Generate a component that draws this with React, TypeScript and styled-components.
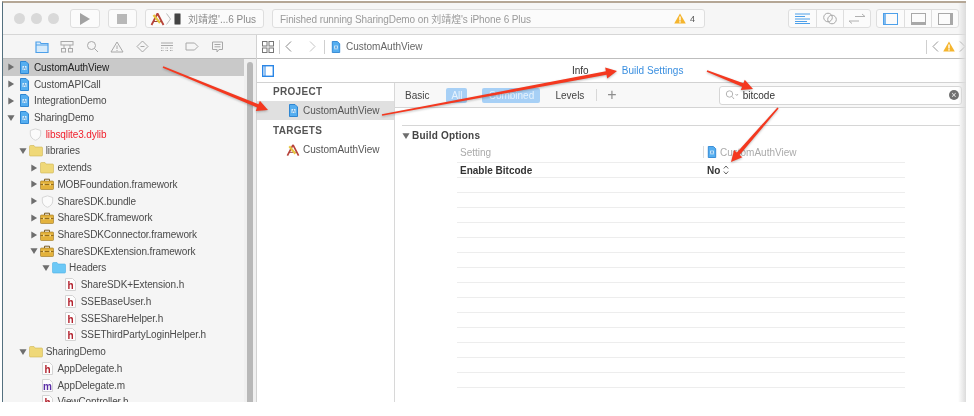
import React from 'react';
import styled, { createGlobalStyle } from 'styled-components';

const GlobalStyle = createGlobalStyle`
  html, body {
    margin: 0;
    padding: 0;
    background: #fff;
    font-family: "Liberation Sans", Arial, sans-serif;
  }
`;

const CJK = '"Liberation Sans", "Noto Sans CJK SC", sans-serif';

// ----- shell -----
const Page = styled.div`
  position: relative;
  width: 974px;
  height: 416px;
  overflow: hidden;
  background: #fff;
`;

const Window = styled.div`
  position: relative;
  margin: 1px 0 0 2px;
  width: 964px;
  height: 401px;
  overflow: hidden;
  display: flex;
  flex-direction: column;
  background: #fff;
  border-top: 2px solid #b5a796;
  border-left: 1px solid #54707f;
  box-sizing: border-box;
  filter: blur(0.5px);
`;

const EdgeFade = styled.div`
  position: absolute;
  top: 0;
  right: 0;
  bottom: 0;
  width: 8px;
  background: linear-gradient(to right, rgba(225, 225, 225, 0), #dcdcdc);
`;

// ----- toolbar -----
const Toolbar = styled.div`
  height: 31px;
  flex: none;
  display: flex;
  align-items: center;
  padding: 0 0 0 11px;
  background: #f6f6f6;
  border-bottom: 1px solid #d6d6d6;
`;

const Lights = styled.div`
  display: flex;
  gap: 6px;
  margin-right: 11px;
`;

const Light = styled.span`
  width: 11px;
  height: 11px;
  border-radius: 50%;
  background: #d9d9d9;
`;

const ToolButton = styled.div`
  width: 29.5px;
  height: 19px;
  flex: none;
  margin-right: 8px;
  box-sizing: border-box;
  display: flex;
  align-items: center;
  justify-content: center;
  background: #fbfbfb;
  border: 1px solid #dedede;
  border-radius: 3px;
`;

const Scheme = styled.div`
  width: 119px;
  height: 19px;
  flex: none;
  margin-right: 8px;
  display: flex;
  align-items: center;
  padding-left: 4px;
  box-sizing: border-box;
  background: #fbfbfb;
  border: 1px solid #dedede;
  border-radius: 3px;
  font: 10px ${CJK};
  color: #8a8a8a;
  white-space: nowrap;
`;

const SchemeChevron = styled.svg`
  margin: 0 3px 0 1px;
`;

const SchemeDevice = styled.svg`
  margin-right: 7px;
`;

const Status = styled.div`
  width: 433px;
  height: 19px;
  flex: none;
  display: flex;
  align-items: center;
  padding: 0 9px 0 7px;
  box-sizing: border-box;
  background: #fbfbfb;
  border: 1px solid #dedede;
  border-radius: 3px;
  font: 10px ${CJK};
  letter-spacing: -0.1px;
  color: #9a9a9a;
  white-space: nowrap;
`;

const StatusText = styled.span`
  flex: 1;
`;

const WarnCount = styled.span`
  margin-left: 4px;
  font-size: 9px;
  color: #555;
`;

const Segments = styled.div`
  display: flex;
  flex: none;
  height: 19px;
  box-sizing: border-box;
  margin-left: 83px;
  background: #fbfbfb;
  border: 1px solid #dedede;
  border-radius: 3px;
`;

const PanelSegments = styled(Segments)`
  margin-left: 5px;
`;

const Segment = styled.div`
  width: 27px;
  box-sizing: border-box;
  display: flex;
  align-items: center;
  justify-content: center;
  & + & {
    border-left: 1px solid #dedede;
  }
`;

// ----- body -----
const Body = styled.div`
  flex: 1;
  min-height: 0;
  display: flex;
`;

const Navigator = styled.div`
  width: 253px;
  flex: none;
  display: flex;
  flex-direction: column;
  background: #f5f5f5;
  border-right: 1px solid #d2d2d2;
`;

const NavTabs = styled.div`
  height: 23px;
  flex: none;
  display: flex;
  align-items: center;
  padding-left: 31px;
  gap: 9px;
  border-bottom: 1px solid #bdbdbd;
`;

const NavTab = styled.div`
  width: 16px;
  display: flex;
  justify-content: center;
`;

const TreeArea = styled.div`
  flex: 1;
  min-height: 0;
  display: flex;
`;

const Tree = styled.div`
  flex: 1;
  min-width: 0;
  overflow: hidden;
`;

const ScrollTrack = styled.div`
  width: 12px;
  flex: none;
  padding: 3px 3px 0;
  box-sizing: border-box;
  background: #f0f0f0;
`;

const ScrollThumb = styled.div`
  height: 100%;
  background: #b8b8b8;
  border-radius: 3px 3px 0 0;
`;

const TreeRow = styled.div<{ $level: number; $selected?: boolean }>`
  height: 16.72px;
  display: flex;
  align-items: center;
  padding-left: ${({ $level }) => 2 + $level * 11.7}px;
  background: ${({ $selected }) => ($selected ? '#c9c9c9' : 'transparent')};
`;

const Disclosure = styled.span`
  width: 12px;
  flex: none;
  display: flex;
  justify-content: center;
`;

const IconSlot = styled.span`
  width: 14px;
  margin-right: 3px;
  flex: none;
  display: flex;
  justify-content: center;
`;

const TreeLabel = styled.span<{ $missing?: boolean; $selected?: boolean }>`
  font-size: 10px;
  letter-spacing: -0.1px;
  white-space: nowrap;
  color: ${({ $missing, $selected }) => ($missing ? '#f0202c' : $selected ? '#222' : '#4a4a4a')};
`;

// ----- editor -----
const Editor = styled.div`
  flex: 1;
  min-width: 0;
  display: flex;
  flex-direction: column;
`;

const JumpBar = styled.div`
  height: 23px;
  flex: none;
  display: flex;
  align-items: center;
  padding: 0 0 0 5px;
  border-bottom: 1px solid #bdbdbd;
  font-size: 10px;
  color: #666;
`;

const JumpDivider = styled.span`
  width: 1px;
  height: 14px;
  margin: 0 5px;
  background: #cfcfcf;
`;

const JumpCrumb = styled.span`
  flex: 1;
  margin-left: 4px;
`;

const JumpWarn = styled.span`
  width: 20px;
  display: flex;
  justify-content: center;
`;

const TabBar = styled.div`
  height: 23px;
  flex: none;
  position: relative;
  display: flex;
  align-items: center;
  padding-left: 5px;
  border-bottom: 1px solid #d2d2d2;
  font-size: 10px;
`;

const Tabs = styled.div`
  display: flex;
  margin-left: 298px;
  gap: 33px;
`;

const TabLabel = styled.span<{ $active?: boolean }>`
  letter-spacing: ${({ $active }) => ($active ? '0.05px' : '0')};
  color: ${({ $active }) => ($active ? '#3a8fe0' : '#333')};
`;

const Split = styled.div`
  flex: 1;
  min-height: 0;
  display: flex;
`;

const ProjectList = styled.div`
  width: 137px;
  flex: none;
  padding-top: 1px;
  border-right: 1px solid #d8d8d8;
`;

const ListHeading = styled.div`
  height: 15px;
  padding-left: 16px;
  display: flex;
  align-items: center;
  font-size: 10px;
  font-weight: 700;
  letter-spacing: 0.3px;
  color: #555;
`;

const ProjectRow = styled.div<{ $selected?: boolean }>`
  height: 19px;
  margin: 2px 0 3px;
  display: flex;
  align-items: center;
  padding-left: 29px;
  background: ${({ $selected }) => ($selected ? '#e0e0e0' : 'transparent')};
  font-size: 10px;
  color: #555;
`;

const ProjectIcon = styled.span`
  width: 14px;
  margin-right: 3px;
  display: flex;
  justify-content: center;
`;

const Settings = styled.div`
  flex: 1;
  min-width: 0;
  display: flex;
  flex-direction: column;
`;

const FilterBar = styled.div`
  height: 24px;
  flex: none;
  display: flex;
  align-items: center;
  padding: 0 4px 0 10px;
  background: #f8f8f8;
  border-bottom: 1px solid #d4d4d4;
  font-size: 10px;
  color: #444;
`;

const FilterText = styled.span<{ $gap: number }>`
  margin-right: ${({ $gap }) => $gap}px;
`;

const Pill = styled.span<{ $width: number; $gap: number }>`
  width: ${({ $width }) => $width}px;
  height: 15px;
  margin-right: ${({ $gap }) => $gap}px;
  display: flex;
  align-items: center;
  justify-content: center;
  border-radius: 2px;
  background: #a7d0f6;
  color: #e6f2fd;
`;

const FilterDivider = styled.span`
  width: 1px;
  height: 12px;
  margin-right: 10px;
  background: #d8d8d8;
`;

const Plus = styled.span`
  font-size: 16px;
  font-weight: 400;
  color: #8e8e8e;
  margin-right: 102px;
`;

const SearchField = styled.div`
  flex: 1;
  height: 17px;
  display: flex;
  align-items: center;
  padding: 0 2px 0 5px;
  background: #fff;
  border: 1px solid #d6d6d6;
  border-radius: 3px;
  color: #333;
`;

const SearchValue = styled.span`
  flex: 1;
  margin-left: 4px;
`;

const Clear = styled.span`
  width: 10px;
  height: 10px;
  border-radius: 50%;
  background: #707070;
  color: #eee;
  font-size: 9px;
  line-height: 10px;
  text-align: center;
`;

const SettingsBody = styled.div`
  flex: 1;
  padding: 17px 61px 0 7px;
`;

const SectionRule = styled.div`
  height: 1px;
  margin-right: -55px;
  background: #d6d6d6;
`;

const SectionTitle = styled.div`
  display: flex;
  align-items: center;
  gap: 2px;
  height: 17px;
  margin-top: 1px;
  font-size: 10px;
  font-weight: 700;
  letter-spacing: 0.2px;
  color: #444;
`;

const SettingsTable = styled.div`
  margin-left: 55px;
`;

const SettingsRow = styled.div`
  height: 14px;
  display: flex;
  align-items: center;
  border-bottom: 1px solid #ededed;
  font-size: 10px;
`;

const HeadRow = styled(SettingsRow)`
  height: 19px;
  padding-bottom: 2px;
  box-sizing: border-box;
  color: #aaa;
`;

const NameCell = styled.span<{ $bold?: boolean }>`
  width: 246px;
  padding-left: 3px;
  box-sizing: border-box;
  flex: none;
  font-weight: ${({ $bold }) => ($bold ? 700 : 400)};
  color: ${({ $bold }) => ($bold ? '#333' : '#aaa')};
`;

const ValueCell = styled.span`
  display: flex;
  align-items: center;
  gap: 3px;
  font-weight: 700;
  color: #333;
  padding-left: 4px;
`;

const HeadValue = styled.span`
  display: flex;
  align-items: center;
  gap: 2px;
  padding-left: 2px;
  border-left: 1px solid #ddd;
`;

const ArrowLayer = styled.svg`
  position: absolute;
  left: 0;
  top: 0;
  filter: drop-shadow(0 1px 1px rgba(60, 60, 60, 0.35)) blur(0.3px);
`;

// ----- icons -----
const Tri: React.FC<{ open?: boolean }> = ({ open }) => (
  <svg width="8" height="8" viewBox="0 0 9 9">
    {open ? <path d="M0.500 1.500h8L4.500 8z" fill="#6e6e6e" /> : <path d="M1.500 0.500v8L8 4.500z" fill="#6e6e6e" />}
  </svg>
);

const FileIcon: React.FC<{ size?: number }> = ({ size = 13 }) => (
  <svg width={size} height={size} viewBox="0 0 13 13">
    <path d="M2.500 0.500h5.500l2.500 2.500v9.500h-8z" fill="#55aef0" stroke="#2f86d2" />
    <rect x="4.500" y="5" width="4" height="4" fill="#d9eefc" />
    <path d="M5.500 8.500l1-3 1 3" fill="none" stroke="#2f86d2" strokeWidth="0.7" />
  </svg>
);

const FolderIcon: React.FC<{ blue?: boolean }> = ({ blue }) => (
  <svg width="14" height="13" viewBox="0 0 14 13">
    <path
      d="M0.500 2.500q0-1 1-1h3.500l1 1.500h6.500q1 0 1 1v7q0 1-1 1h-11q-1 0-1-1z"
      fill={blue ? '#6cc8f6' : '#efd878'}
      stroke={blue ? '#4bb0e6' : '#cfb555'}
      strokeWidth="0.6"
    />
  </svg>
);

const ToolboxIcon: React.FC = () => (
  <svg width="14" height="12" viewBox="0 0 14 12">
    <path d="M4.500 3V1.200h5V3" fill="none" stroke="#7a5a20" strokeWidth="1" />
    <rect x="0.500" y="3" width="13" height="8.500" rx="0.800" fill="#e3b23c" stroke="#9a7320" strokeWidth="0.6" />
    <path d="M0.500 6.500h13" stroke="#8a6418" strokeWidth="0.9" />
    <rect x="3" y="5.600" width="1.600" height="1.800" fill="#f4e0a0" />
    <rect x="9.400" y="5.600" width="1.600" height="1.800" fill="#f4e0a0" />
  </svg>
);

const ShieldIcon: React.FC = () => (
  <svg width="13" height="13" viewBox="0 0 13 13">
    <path d="M6.500 0.800l5.200 1.700v3.600c0 3-2.400 5.200-5.200 6.200-2.800-1-5.200-3.200-5.200-6.200V2.500z" fill="#fbfbfb" stroke="#d6d6d6" />
  </svg>
);

const SourceIcon: React.FC<{ letter: string; color: string }> = ({ letter, color }) => (
  <svg width="11" height="13" viewBox="0 0 11 13">
    <path d="M0.500 0.500h7l3 3v9h-10z" fill="#fdfdfd" stroke="#d4d4d4" />
    <text x="5.500" y="10.500" textAnchor="middle" fontFamily="Liberation Sans" fontWeight="700" fontSize="10" fill={color}>
      {letter}
    </text>
  </svg>
);

const TargetIcon: React.FC = () => (
  <svg width="15" height="14" viewBox="0 0 15 14">
    <path d="M7.500 1.500L1.500 13M7.500 1.500L13.500 13" fill="none" stroke="#b8433a" strokeWidth="1.800" />
    <path d="M3.500 9.500h8" stroke="#a0413a" strokeWidth="1" />
    <path d="M3.500 3l6.500 8" stroke="#e6c640" strokeWidth="2.200" />
  </svg>
);

type IconName = 'file' | 'folder' | 'blue' | 'box' | 'shield' | 'h' | 'm';

const TreeIcon: React.FC<{ name: IconName }> = ({ name }) => {
  switch (name) {
    case 'file':
      return <FileIcon />;
    case 'folder':
      return <FolderIcon />;
    case 'blue':
      return <FolderIcon blue />;
    case 'box':
      return <ToolboxIcon />;
    case 'shield':
      return <ShieldIcon />;
    case 'h':
      return <SourceIcon letter="h" color="#b3202c" />;
    default:
      return <SourceIcon letter="m" color="#5a2ea6" />;
  }
};

const WarningIcon: React.FC = () => (
  <svg width="12" height="11" viewBox="0 0 12 11">
    <path d="M6 0.500L11.800 10.500H0.200z" fill="#f5b52e" />
    <rect x="5.300" y="3.500" width="1.400" height="4" fill="#fff" />
    <rect x="5.300" y="8.200" width="1.400" height="1.400" fill="#fff" />
  </svg>
);

const navIcon = { fill: 'none', stroke: '#a8a8a8', strokeWidth: 1 };

const NavIcons: React.ReactNode[] = [
  <svg key="folder" width="14" height="12" viewBox="0 0 14 12">
    <path d="M1 1h4l1 1.500h7v9H1z" fill="#d5eafb" stroke="#4da0ea" strokeWidth="1.200" />
    <path d="M1 4h12" stroke="#4da0ea" />
  </svg>,
  <svg key="tree" width="14" height="12" viewBox="0 0 14 12" {...navIcon}>
    <rect x="1" y="0.500" width="12" height="3.500" />
    <path d="M4 4v3M10 4v3" />
    <rect x="1.500" y="7.500" width="4" height="3.500" />
    <rect x="8.500" y="7.500" width="4" height="3.500" />
  </svg>,
  <svg key="search" width="13" height="13" viewBox="0 0 13 13" {...navIcon}>
    <circle cx="5.500" cy="5.500" r="4" />
    <path d="M8.500 8.500l3.500 3.500" />
  </svg>,
  <svg key="warn" width="14" height="12" viewBox="0 0 14 12" {...navIcon}>
    <path d="M7 1l6 10H1z" />
    <path d="M7 4.500v3.500M7 9v1" />
  </svg>,
  <svg key="test" width="13" height="13" viewBox="0 0 13 13" {...navIcon}>
    <path d="M6.500 1L12 6.500 6.500 12 1 6.500z" />
    <path d="M4.500 6.500h4" />
  </svg>,
  <svg key="debug" width="14" height="10" viewBox="0 0 14 10" {...navIcon}>
    <path d="M1 1h12M1 3.500h12" />
    <path d="M1 6h3M5.500 6h3M10 6h3M1 8.500h3M5.500 8.500h3M10 8.500h3" strokeDasharray="1 0.500" />
  </svg>,
  <svg key="label" width="14" height="9" viewBox="0 0 14 9" {...navIcon}>
    <path d="M1 1h8.500L13 4.500 9.500 8H1z" />
  </svg>,
  <svg key="report" width="13" height="12" viewBox="0 0 13 12" {...navIcon}>
    <path d="M1.500 1h10v7.500H8L6 11V8.500H1.500z" />
    <path d="M3.500 3.500h6M3.500 5.800h6" />
  </svg>
];

interface Row {
  level: number;
  label: string;
  icon: IconName;
  tri?: 'open' | 'closed';
  selected?: boolean;
  missing?: boolean;
}

const rows: Row[] = [
  { level: 0, label: 'CustomAuthView', icon: 'file', tri: 'closed', selected: true },
  { level: 0, label: 'CustomAPICall', icon: 'file', tri: 'closed' },
  { level: 0, label: 'IntegrationDemo', icon: 'file', tri: 'closed' },
  { level: 0, label: 'SharingDemo', icon: 'file', tri: 'open' },
  { level: 1, label: 'libsqlite3.dylib', icon: 'shield', missing: true },
  { level: 1, label: 'libraries', icon: 'folder', tri: 'open' },
  { level: 2, label: 'extends', icon: 'folder', tri: 'closed' },
  { level: 2, label: 'MOBFoundation.framework', icon: 'box', tri: 'closed' },
  { level: 2, label: 'ShareSDK.bundle', icon: 'shield', tri: 'closed' },
  { level: 2, label: 'ShareSDK.framework', icon: 'box', tri: 'closed' },
  { level: 2, label: 'ShareSDKConnector.framework', icon: 'box', tri: 'closed' },
  { level: 2, label: 'ShareSDKExtension.framework', icon: 'box', tri: 'open' },
  { level: 3, label: 'Headers', icon: 'blue', tri: 'open' },
  { level: 4, label: 'ShareSDK+Extension.h', icon: 'h' },
  { level: 4, label: 'SSEBaseUser.h', icon: 'h' },
  { level: 4, label: 'SSEShareHelper.h', icon: 'h' },
  { level: 4, label: 'SSEThirdPartyLoginHelper.h', icon: 'h' },
  { level: 1, label: 'SharingDemo', icon: 'folder', tri: 'open' },
  { level: 2, label: 'AppDelegate.h', icon: 'h' },
  { level: 2, label: 'AppDelegate.m', icon: 'm' },
  { level: 2, label: 'ViewController.h', icon: 'h' }
];

const EMPTY_ROWS = Array.from({ length: 14 }, (_, i) => i);

// tapered arrow: thin tail, wider towards the head
const Arrow: React.FC<{ from: [number, number]; to: [number, number] }> = ({ from, to }) => {
  const dx = to[0] - from[0];
  const dy = to[1] - from[1];
  const len = Math.hypot(dx, dy);
  const ux = dx / len;
  const uy = dy / len;
  const nx = -uy;
  const ny = ux;
  const neckX = to[0] - ux * 11;
  const neckY = to[1] - uy * 11;
  const pts = [
    [from[0] + nx * 0.8, from[1] + ny * 0.8],
    [neckX + nx * 1.8, neckY + ny * 1.8],
    [neckX + nx * 5.5, neckY + ny * 5.5],
    [to[0], to[1]],
    [neckX - nx * 5.5, neckY - ny * 5.5],
    [neckX - nx * 1.8, neckY - ny * 1.8],
    [from[0] - nx * 0.8, from[1] - ny * 0.8]
  ];
  return <polygon points={pts.map((p) => p.join(',')).join(' ')} fill="#f4381f" />;
};

const App: React.FC = () => {
  return (
    <Page>
      <GlobalStyle />
      <Window>
        <Toolbar>
          <Lights>
            <Light />
            <Light />
            <Light />
          </Lights>
          <ToolButton>
            <svg width="10" height="12" viewBox="0 0 10 12">
              <path d="M0 0l10 6-10 6z" fill="#a2a2a2" />
            </svg>
          </ToolButton>
          <ToolButton>
            <svg width="10" height="10" viewBox="0 0 10 10">
              <rect width="10" height="10" fill="#b8b8b8" />
            </svg>
          </ToolButton>
          <Scheme>
            <TargetIcon />
            <SchemeChevron width="5" height="12" viewBox="0 0 5 12">
              <path d="M0.500 0.500L4.500 6 0.500 11.500" fill="none" stroke="#bbb" />
            </SchemeChevron>
            <SchemeDevice width="7" height="12" viewBox="0 0 7 12">
              <rect x="0.500" y="0.500" width="6" height="11" rx="1" fill="#444" stroke="#999" />
            </SchemeDevice>
            刘靖煌'...6 Plus
          </Scheme>
          <Status>
            <StatusText>Finished running SharingDemo on 刘靖煌's iPhone 6 Plus</StatusText>
            <WarningIcon />
            <WarnCount>4</WarnCount>
          </Status>
          <Segments>
            <Segment>
              <svg width="15" height="11" viewBox="0 0 15 11">
                <path d="M0 1h15M0 3.500h10M0 6h15M0 8.500h12M0 10.500h15" stroke="#4da0ea" />
              </svg>
            </Segment>
            <Segment>
              <svg width="14" height="13" viewBox="0 0 14 13" fill="none" stroke="#a8a8a8">
                <circle cx="5" cy="5.500" r="4.300" />
                <circle cx="9" cy="7.500" r="4.300" />
              </svg>
            </Segment>
            <Segment>
              <svg width="16" height="11" viewBox="0 0 16 11" fill="none" stroke="#b0b0b0">
                <path d="M6 3.500h10M13 1l3 2.500M0 8h10M3 10.500L0 8" />
              </svg>
            </Segment>
          </Segments>
          <PanelSegments>
            <Segment>
              <svg width="15" height="12" viewBox="0 0 15 12" fill="none" stroke="#4da0ea">
                <rect x="0.500" y="0.500" width="14" height="11" />
                <path d="M2 0.500v11" strokeWidth="1.400" />
              </svg>
            </Segment>
            <Segment>
              <svg width="15" height="12" viewBox="0 0 15 12" fill="none" stroke="#a8a8a8">
                <rect x="0.500" y="0.500" width="14" height="11" />
                <path d="M0.500 10h14" strokeWidth="2" />
              </svg>
            </Segment>
            <Segment>
              <svg width="15" height="12" viewBox="0 0 15 12" fill="none" stroke="#a8a8a8">
                <rect x="0.500" y="0.500" width="14" height="11" />
                <path d="M13 0.500v11" strokeWidth="2" />
              </svg>
            </Segment>
          </PanelSegments>
        </Toolbar>
        <Body>
          <Navigator>
            <NavTabs>
              {NavIcons.map((icon, i) => (
                <NavTab key={i}>{icon}</NavTab>
              ))}
            </NavTabs>
            <TreeArea>
              <Tree>
                {rows.map((row) => (
                  <TreeRow key={row.label + row.level} $level={row.level} $selected={row.selected}>
                    <Disclosure>{row.tri && <Tri open={row.tri === 'open'} />}</Disclosure>
                    <IconSlot>
                      <TreeIcon name={row.icon} />
                    </IconSlot>
                    <TreeLabel $missing={row.missing} $selected={row.selected}>
                      {row.label}
                    </TreeLabel>
                  </TreeRow>
                ))}
              </Tree>
              <ScrollTrack>
                <ScrollThumb />
              </ScrollTrack>
            </TreeArea>
          </Navigator>
          <Editor>
            <JumpBar>
              <svg width="12" height="12" viewBox="0 0 12 12" fill="none" stroke="#777">
                <rect x="0.500" y="0.500" width="4.500" height="4.500" />
                <rect x="7" y="0.500" width="4.500" height="4.500" />
                <rect x="0.500" y="7" width="4.500" height="4.500" />
                <rect x="7" y="7" width="4.500" height="4.500" />
              </svg>
              <JumpDivider />
              <svg width="7" height="11" viewBox="0 0 7 11" fill="none" stroke="#888">
                <path d="M6 0.500L1 5.500l5 5" />
              </svg>
              <svg width="27" height="11" viewBox="0 0 27 11" fill="none" stroke="#c4c4c4">
                <path d="M18 0.500l5 5-5 5" />
              </svg>
              <JumpDivider />
              <FileIcon size={12} />
              <JumpCrumb>CustomAuthView</JumpCrumb>
              <JumpDivider />
              <svg width="7" height="11" viewBox="0 0 7 11" fill="none" stroke="#999">
                <path d="M6 0.500L1 5.500l5 5" />
              </svg>
              <JumpWarn>
                <WarningIcon />
              </JumpWarn>
              <svg width="7" height="11" viewBox="0 0 7 11" fill="none" stroke="#999">
                <path d="M1 0.500l5 5-5 5" />
              </svg>
            </JumpBar>
            <TabBar>
              <svg width="12" height="12" viewBox="0 0 12 12" fill="none" stroke="#2a86e6">
                <rect x="0.700" y="0.700" width="10.600" height="10.600" strokeWidth="1.400" />
                <path d="M3 1v10" strokeWidth="1" />
              </svg>
              <Tabs>
                <TabLabel>Info</TabLabel>
                <TabLabel $active>Build Settings</TabLabel>
              </Tabs>
            </TabBar>
            <Split>
              <ProjectList>
                <ListHeading>PROJECT</ListHeading>
                <ProjectRow $selected>
                  <ProjectIcon>
                    <FileIcon />
                  </ProjectIcon>
                  <span>CustomAuthView</span>
                </ProjectRow>
                <ListHeading>TARGETS</ListHeading>
                <ProjectRow>
                  <ProjectIcon>
                    <TargetIcon />
                  </ProjectIcon>
                  <span>CustomAuthView</span>
                </ProjectRow>
              </ProjectList>
              <Settings>
                <FilterBar>
                  <FilterText $gap={17}>Basic</FilterText>
                  <Pill $width={21} $gap={15}>All</Pill>
                  <Pill $width={58} $gap={15}>Combined</Pill>
                  <FilterText $gap={12}>Levels</FilterText>
                  <FilterDivider />
                  <Plus>+</Plus>
                  <SearchField>
                    <svg width="14" height="10" viewBox="0 0 14 10" fill="none" stroke="#b4b4b4">
                      <circle cx="4.500" cy="4" r="3.200" />
                      <path d="M7 6.500l2 2.500M10.500 4l1.300 1.500L13 4" />
                    </svg>
                    <SearchValue>bitcode</SearchValue>
                    <Clear>×</Clear>
                  </SearchField>
                </FilterBar>
                <SettingsBody>
                  <SectionRule />
                  <SectionTitle>
                    <Tri open />
                    Build Options
                  </SectionTitle>
                  <SettingsTable>
                    <HeadRow>
                      <NameCell>Setting</NameCell>
                      <HeadValue>
                        <FileIcon size={12} />
                        CustomAuthView
                      </HeadValue>
                    </HeadRow>
                    <SettingsRow>
                      <NameCell $bold>Enable Bitcode</NameCell>
                      <ValueCell>
                        No
                        <svg width="6" height="10" viewBox="0 0 6 10" fill="none" stroke="#666">
                          <path d="M0.800 3.500L3 1l2.200 2.500M0.800 6.500L3 9l2.200-2.500" />
                        </svg>
                      </ValueCell>
                    </SettingsRow>
                    {EMPTY_ROWS.map((i) => (
                      <SettingsRow key={i} />
                    ))}
                  </SettingsTable>
                </SettingsBody>
              </Settings>
            </Split>
          </Editor>
        </Body>
        <EdgeFade />
      </Window>
      <ArrowLayer width="974" height="416" viewBox="0 0 974 416">
        <Arrow from={[163, 67]} to={[268, 110]} />
        <Arrow from={[382, 115]} to={[617, 71]} />
        <Arrow from={[707, 71]} to={[753, 89]} />
        <Arrow from={[778, 108]} to={[731, 162]} />
      </ArrowLayer>
    </Page>
  );
};

export default App;
